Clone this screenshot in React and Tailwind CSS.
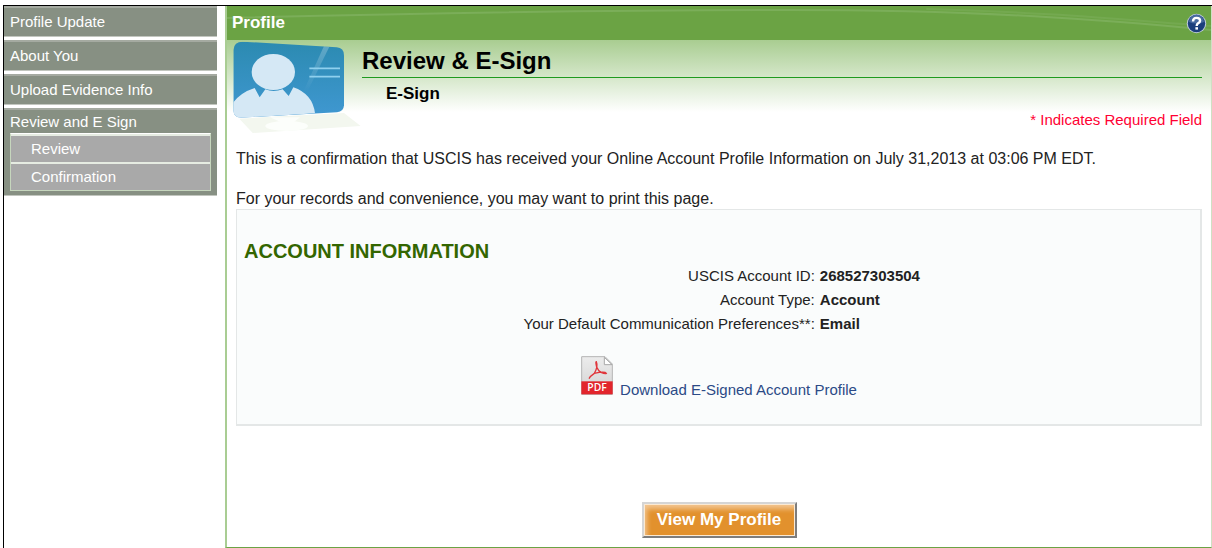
const navItems = ["Profile Update", "About You", "Upload Evidence Info"];
const subItems = ["Review", "Confirmation"];

const account = [
  ["USCIS Account ID:", "268527303504"],
  ["Account Type:", "Account"],
  ["Your Default Communication Preferences**:", "Email"],
];

function ProfileCard() {
  return (
    <svg width="130" height="95" viewBox="36 120 390 285" className="shrink-0" aria-hidden="true">
      <defs>
        <linearGradient id="card" x1="0" y1="0" x2="0" y2="1">
          <stop offset="0" stopColor="#2b8ab0" />
          <stop offset="1" stopColor="#4098d2" />
        </linearGradient>
        <linearGradient id="streak" x1="0" y1="0" x2="0" y2="1">
          <stop offset="0" stopColor="#fff" stopOpacity="0.25" />
          <stop offset="1" stopColor="#fff" stopOpacity="0" />
        </linearGradient>
        <clipPath id="cardClip">
          <path d="M68 125 L350 142 Q372 144 372 166 V316 Q371 335 351 337 L64 353 Q42 353 40 332 V150 Q42 125 68 125Z" />
        </clipPath>
      </defs>
      <path d="M58 356 L372 339 L422 378 L98 399Z" fill="#f3f7ef" />
      <ellipse cx="200" cy="378" rx="64" ry="15" fill="#fcfefb" />
      <path d="M150 352 H240 L222 366 H182Z" fill="#fcfefb" />
      <g clipPath="url(#cardClip)">
        <rect x="36" y="120" width="340" height="236" fill="url(#card)" />
        <path d="M312 138 L328 140 L262 275 L250 275Z" fill="url(#streak)" />
        <path d="M268 205 H360 M268 230 H360" stroke="#8fd0ee" strokeWidth="5" />
        <path d="M36 312 Q60 278 104 264 L119 292 L136 268 Q160 278 188 268 L206 288 L220 262 Q278 282 285 340 L36 356Z" fill="#d5e8f5" />
        <ellipse cx="160" cy="216" rx="65" ry="54" fill="#d5e8f5" />
      </g>
    </svg>
  );
}

function HelpIcon() {
  return (
    <svg width="21" height="21" viewBox="0 0 21 21" aria-hidden="true">
      <circle cx="10.5" cy="10.5" r="9.7" fill="#c3cfe0" />
      <circle cx="10.5" cy="10.5" r="8.7" fill="#1c3f7c" />
      <path d="M3 9 A7.5 7.5 0 0 1 18 9 Q10 12 3 9Z" fill="#47699f" />
      <path d="M7 8.4 Q7 4.9 10.5 4.9 Q14.1 4.9 14.1 7.8 Q14.1 9.4 12 10.4 Q10.7 11.1 10.7 13" fill="none" stroke="#fff" strokeWidth="2.4" />
      <rect x="9.4" y="14.2" width="2.6" height="2.4" fill="#fff" />
    </svg>
  );
}

function PdfIcon() {
  return (
    <svg width="34" height="41" viewBox="237 282 102 123" className="mb-1" aria-hidden="true">
      <defs>
        <linearGradient id="sheet" x1="0" y1="0" x2="0" y2="1">
          <stop offset="0" stopColor="#ececec" />
          <stop offset="1" stopColor="#d2d2d2" />
        </linearGradient>
      </defs>
      <path d="M242 287 H312 L334 309 V400 H242Z" fill="url(#sheet)" stroke="#b5b5b5" strokeWidth="3" />
      <path d="M310 289 L333 311 H310Z" fill="#fff" stroke="#a8a8a8" strokeWidth="3" />
      <path d="M264 353 Q268 345 280 337 Q292 316 286 302 Q283 302 287 318 Q292 330 300 334 Q312 339 316 337 Q312 330 280 337" fill="none" stroke="#e0363c" strokeWidth="4" />
      <rect x="241" y="361" width="94" height="39" fill="#e2252c" />
      <text x="288" y="391" textAnchor="middle" fontFamily="Open Sans, sans-serif" fontWeight="600" fontSize="31" fill="#fff">PDF</text>
    </svg>
  );
}

export default function App() {
  return (
    <div className="flex min-h-screen flex-col bg-white pt-[5px] pl-[3px] font-['Liberation_Sans',Arial,sans-serif] text-[15px] text-[#222]">
      <div className="flex flex-1 gap-2 border-t border-l border-black">
        <nav className="flex w-[213px] shrink-0 flex-col gap-[3px] text-white">
          {navItems.map((item) => (
            <a key={item} href="#" className="block h-[31px] border-t-2 border-b border-t-[#a5aaa1] border-b-[#c2c6bf] bg-[#879083] px-1.5 leading-7">
              {item}
            </a>
          ))}
          <div className="border-t-2 border-b border-t-[#a5aaa1] border-b-[#c2c6bf] bg-[#879083] px-1.5 pt-px pb-1">
            <a href="#" className="block leading-[22px]">Review and E Sign</a>
            <div className="border border-[#c6d6bd] border-t-white">
              {subItems.map((item) => (
                <a key={item} href="#" className="block border-t-2 border-[#e6ece2] bg-[#a9a9a9] pl-5 leading-[26px]">
                  {item}
                </a>
              ))}
            </div>
          </div>
        </nav>

        <main className="flex min-w-0 flex-1 flex-col border-r border-b border-l-2 border-r-[#cfe0c4] border-b-[#6ba344] border-l-[#a9cd93]">
          <header className="relative flex h-[34px] items-center justify-between bg-[#6ba344] pr-1 pl-[5px] text-white">
            <svg className="absolute inset-0 h-full w-full" viewBox="0 0 985 34" preserveAspectRatio="none" aria-hidden="true">
              <path d="M0 12 C200 7 350 4 560 4 C760 4 880 14 985 24" fill="none" stroke="#7bae59" strokeWidth="2" />
              <path d="M700 3 C820 6 900 14 985 20" fill="none" stroke="#74a950" strokeWidth="2" />
            </svg>
            <h1 className="relative text-[17px] font-bold">Profile</h1>
            <button type="button" aria-label="Help" className="relative">
              <HelpIcon />
            </button>
          </header>

          <div className="flex bg-linear-to-b from-[#a9cd91] to-white to-[72px] pr-[9px] pl-[5px]">
            <ProfileCard />
            <div className="flex-1">
              <h2 className="border-b border-[#1f9a1f] pt-[5px] text-2xl leading-8 font-bold text-black">Review &amp; E-Sign</h2>
              <h3 className="pl-6 text-[17px] leading-8 font-bold text-black">E-Sign</h3>
              <p className="text-right leading-5 text-[#ff0033]">* Indicates Required Field</p>
            </div>
          </div>

          <div className="flex flex-1 flex-col px-[9px] pt-[14px]">
            <p className="text-base leading-5">
              This is a confirmation that USCIS has received your Online Account Profile Information on July 31,2013 at 03:06 PM EDT.
            </p>
            <p className="mt-5 text-base leading-5">For your records and convenience, you may want to print this page.</p>
            <section className="border border-r-2 border-b-2 border-[#e4e7e7] bg-[#fafcfc] pt-7 pb-6">
              <h3 className="pl-[7px] text-xl leading-[26px] font-bold text-[#336600]">ACCOUNT INFORMATION</h3>
              <table className="w-full">
                <tbody>
                  {account.map(([label, value]) => (
                    <tr key={label} className="leading-6">
                      <th scope="row" className="w-3/5 p-0 text-right font-normal">{label}</th>
                      <td className="p-0 pl-[5px] font-bold">{value}</td>
                    </tr>
                  ))}
                </tbody>
              </table>
              <a href="#" className="mt-[19px] flex items-end justify-center gap-1.5 leading-5 text-[#2b4a86]">
                <PdfIcon />
                Download E-Signed Account Profile
              </a>
            </section>
            <button type="button" className="mt-[76px] mb-[9px] h-9 w-[155px] self-center border-2 border-t-[#d5d5d5] border-r-[#7d7d7d] border-b-[#7d7d7d] border-l-[#d5d5d5] bg-[#e2912d] text-[17px] font-bold text-white shadow-[inset_0_0_0_1px_#fbe9d2,inset_3px_5px_5px_#f2c48e]">
              View My Profile
            </button>
          </div>
        </main>
      </div>
    </div>
  );
}
